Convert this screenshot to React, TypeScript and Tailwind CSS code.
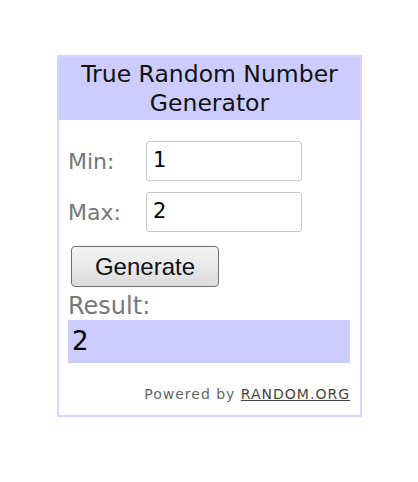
import React from 'react';

export default function App() {
    return (
        <div className="w-[418px] h-[482px] bg-white pt-[55px] pl-[57px]" style={{ fontFamily: '"DejaVu Sans", Verdana, sans-serif' }}>
            <div className="w-[305px] h-[362px] border-2 border-[#d4d4ff] flex flex-col">
                <div className="bg-[#ccccff] h-[63px] flex flex-col items-center justify-center text-[23.5px] leading-[29px] text-[#111]">
                    <div>True Random Number</div>
                    <div>Generator</div>
                </div>
                <div className="flex-1 pl-[9px] pr-[10px] pt-[21px] flex flex-col">
                    <div className="flex items-center h-[40px]">
                        <span className="w-[78px] text-[22px] text-[#777]">Min:</span>
                        <div className="w-[156px] h-[40px] border border-[#c8c8c8] rounded-[3px] flex items-center pl-[6px] text-[21px] text-black">1</div>
                    </div>
                    <div className="flex items-center h-[40px] mt-[11px]">
                        <span className="w-[78px] text-[22px] text-[#777]">Max:</span>
                        <div className="w-[156px] h-[40px] border border-[#c8c8c8] rounded-[3px] flex items-center pl-[6px] text-[21px] text-black">2</div>
                    </div>
                    <button className="mt-[14px] ml-[3px] w-[148px] h-[41px] border border-[#707070] rounded-[4px] bg-gradient-to-b from-[#f4f4f4] to-[#dcdcdc] text-[24px] text-[#111] flex items-center justify-center" style={{ fontFamily: '"Liberation Sans", Arial, sans-serif' }}>
                        Generate
                    </button>
                    <div className="mt-[6px] text-[24px] leading-[26px] text-[#777]">Result:</div>
                    <div className="mt-[1px] h-[43px] bg-[#ccccff] flex items-center pl-[4px] text-[26px] text-black">2</div>
                    <div className="mt-auto mb-[10px] text-right text-[14px] tracking-[1px] text-[#666]">
                        Powered by <span className="underline text-[#444]">RANDOM.ORG</span>
                    </div>
                </div>
            </div>
        </div>
    );
}
